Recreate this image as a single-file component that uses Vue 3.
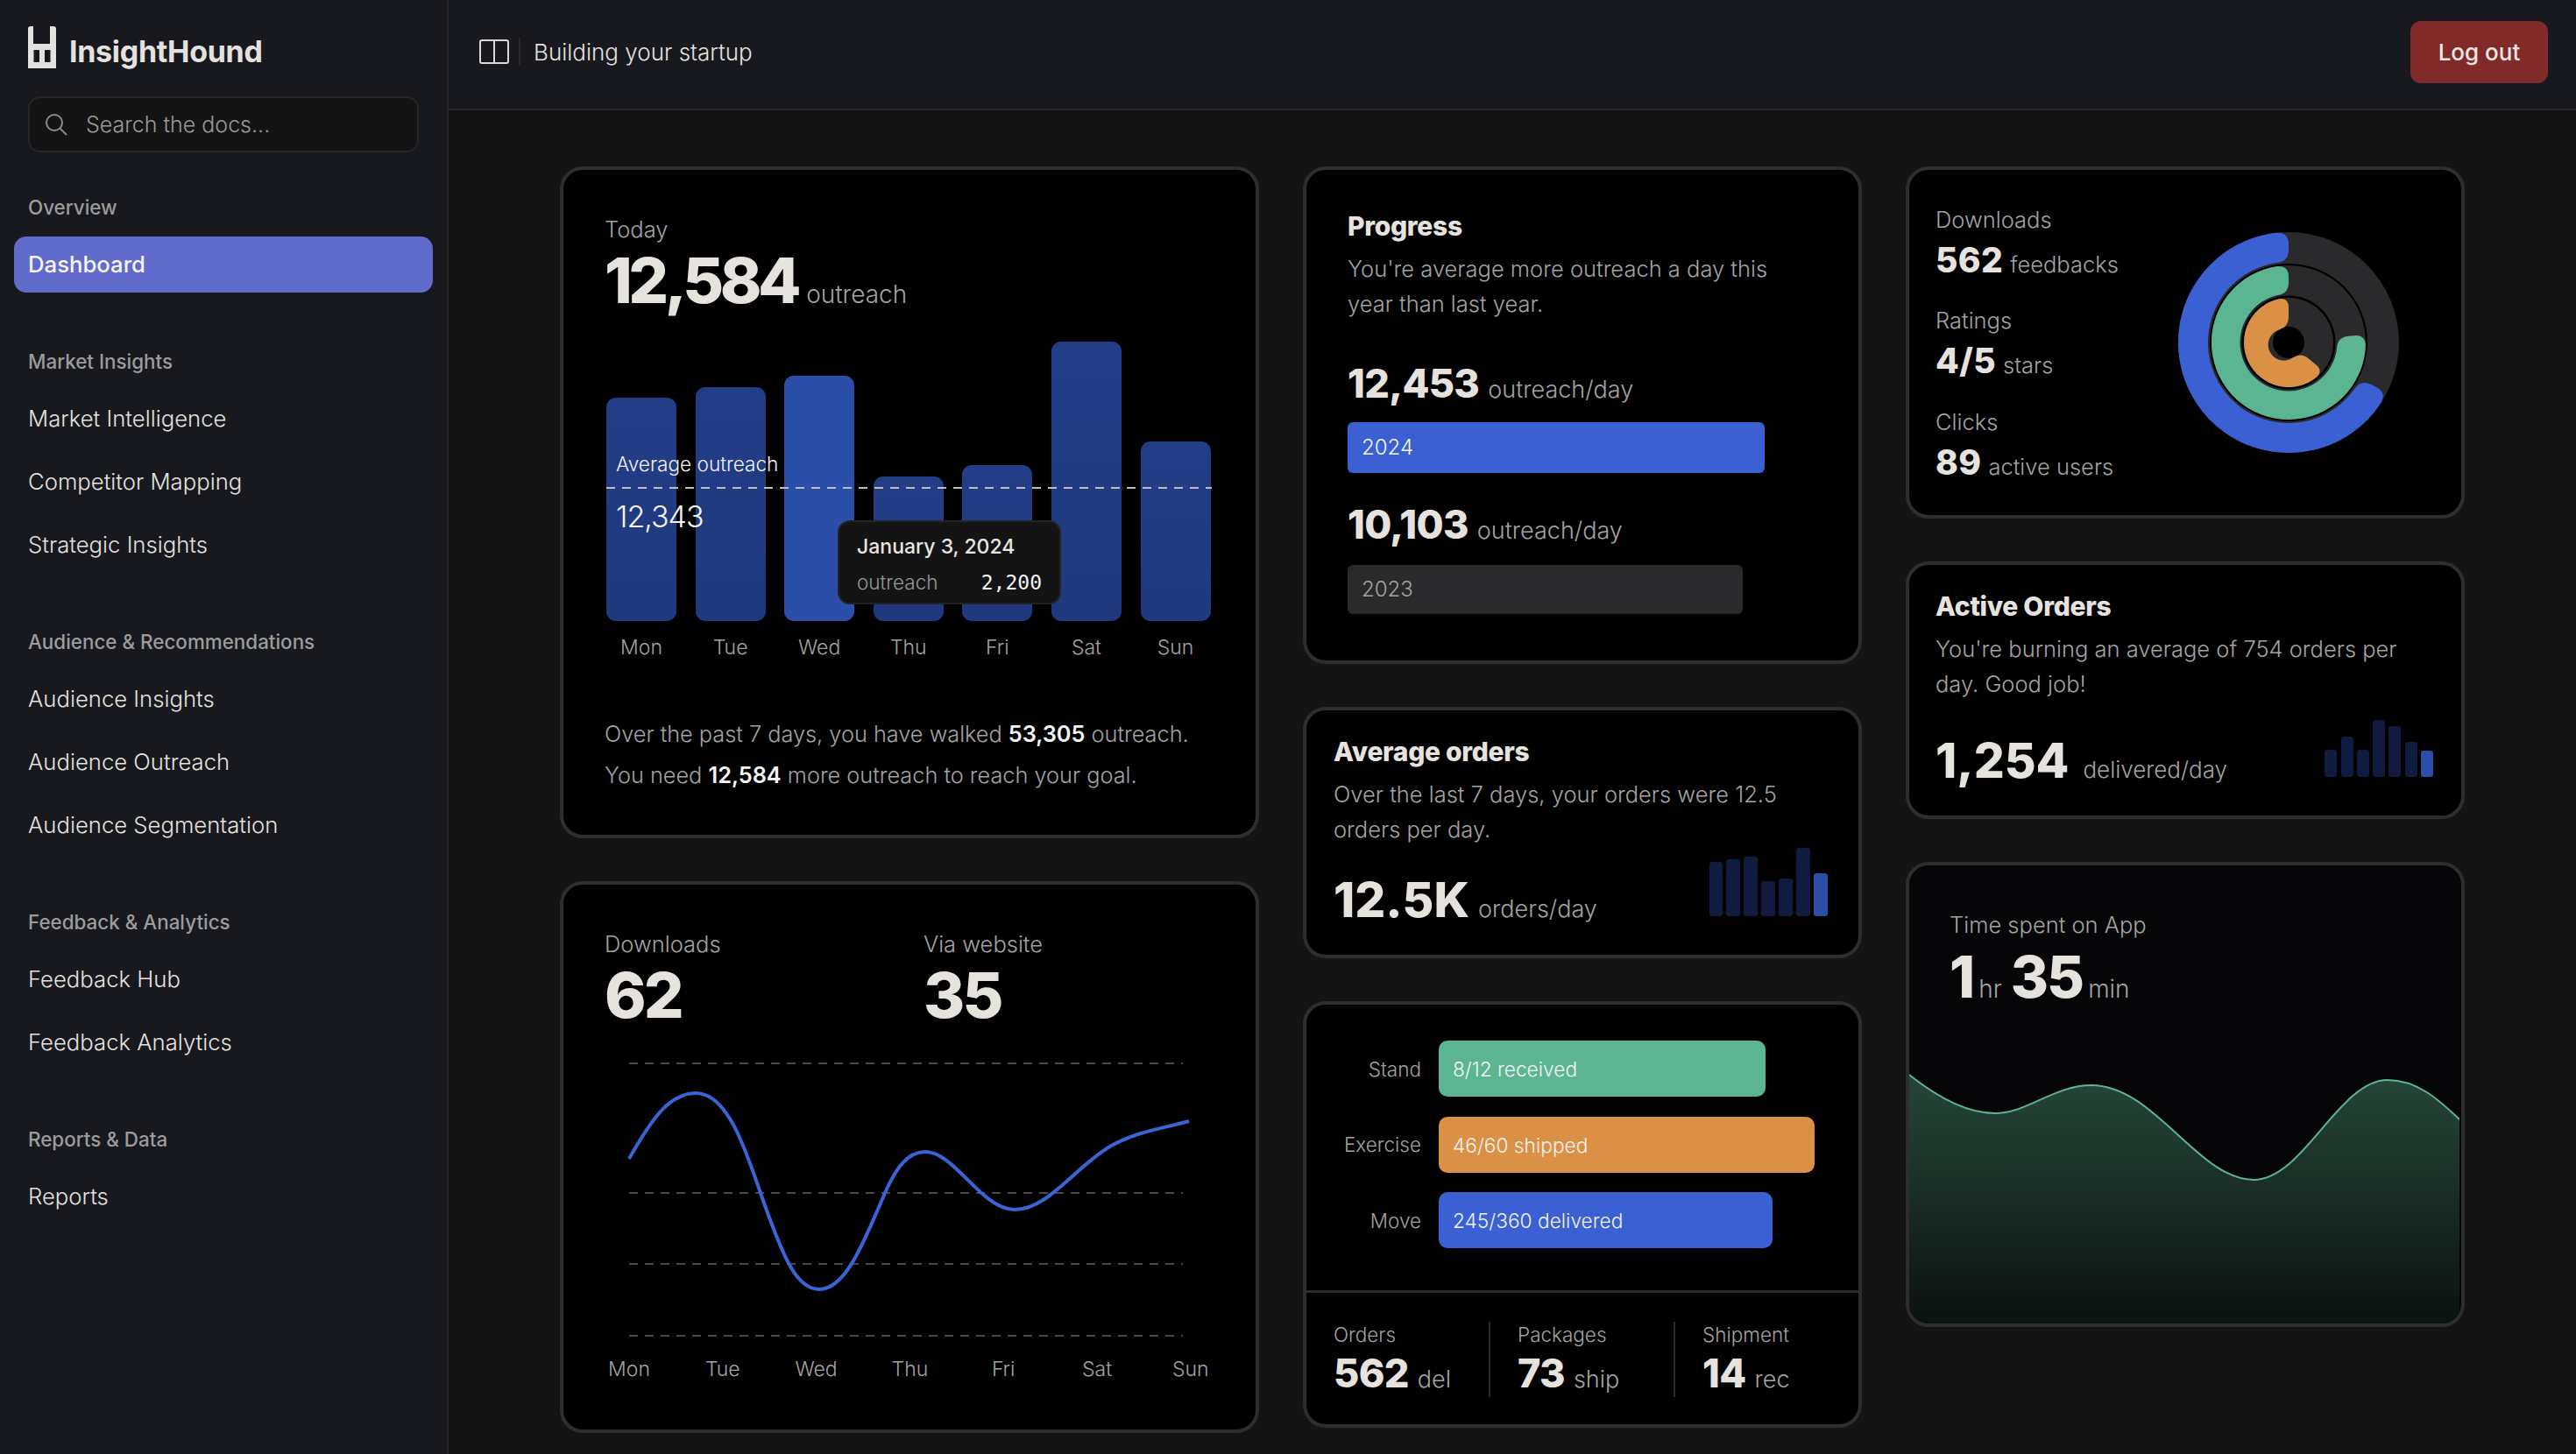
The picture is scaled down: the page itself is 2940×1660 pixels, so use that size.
<template>
  <div class="app">
    <aside class="sidebar">
      <div class="brand">
        <svg class="logo" viewBox="0 0 32 48" width="32" height="48">
          <path fill="#e4e2de" fill-rule="evenodd" d="M0 3Q0 0 3 0H6V20H25V0H29Q32 0 32 3V48H0ZM6.5 27V41H13V27ZM19 27V41H25.5V27Z" />
        </svg>
        <span class="brand-name">InsightHound</span>
      </div>
      <div class="search">
        <svg width="28" height="28" viewBox="0 0 28 28" fill="none" stroke="#8a8a8a" stroke-width="2">
          <circle cx="12" cy="12" r="9" />
          <path d="M18.5 18.5L26 26" />
        </svg>
        <span>Search the docs...</span>
      </div>
      <nav>
        <div v-for="g in nav" :key="g.title" class="group">
          <div class="group-title">{{ g.title }}</div>
          <div v-for="item in g.items" :key="item" class="nav-item" :class="{ active: item === 'Dashboard' }">
            {{ item }}
          </div>
        </div>
      </nav>
    </aside>

    <div class="main">
      <header class="topbar">
        <svg width="34" height="28" viewBox="0 0 34 28" fill="none" stroke="#d8d8d8" stroke-width="2">
          <rect x="1" y="1" width="32" height="26" rx="2" />
          <path d="M17 1V27" />
        </svg>
        <span class="vr"></span>
        <span class="crumb">Building your startup</span>
        <button class="logout">Log out</button>
      </header>

      <div class="grid">
        <div class="col">
          <section class="card today">
            <div class="label">Today</div>
            <div class="val big-row"><span class="num xl tight">12,584</span><span class="unit big-unit">outreach</span></div>
            <div class="chart">
              <div v-for="b in weekBars" :key="b.day" class="bar-col">
                <div class="bar" :class="{ hot: b.day === 'Wed' }" :style="{ height: b.h + 'px' }"></div>
                <div class="day">{{ b.day }}</div>
              </div>
              <div class="avg-line"></div>
              <div class="avg-label">Average outreach</div>
              <div class="avg-value">12,343</div>
              <div class="tooltip">
                <div class="tip-date">January 3, 2024</div>
                <div class="tip-row"><span>outreach</span><b>2,200</b></div>
              </div>
            </div>
            <p class="summary">Over the past 7 days, you have walked <b>53,305</b> outreach.<br />You need <b>12,584</b> more outreach to reach your goal.</p>
          </section>

          <section class="card downloads">
            <div class="two">
              <div>
                <div class="label">Downloads</div>
                <div class="num xl row-80">62</div>
              </div>
              <div>
                <div class="label">Via website</div>
                <div class="num xl row-80">35</div>
              </div>
            </div>
            <svg class="line-chart" viewBox="690 1190 700 400" width="700" height="400">
              <path v-for="y in gridYs" :key="y" :d="`M718 ${y}H1350`" stroke="#4a4a4a" stroke-width="2" stroke-dasharray="10 8" />
              <path d="M718 1323C745 1275 765 1248 794 1248C830 1248 850 1310 868 1362C895 1440 910 1472 935 1472C965 1472 985 1420 1010 1362C1022 1335 1035 1315 1056 1315C1090 1315 1120 1381 1158 1381C1195 1381 1225 1335 1265 1310C1295 1292 1325 1289 1357 1280" fill="none" stroke="#3a63d4" stroke-width="4" />
              <text v-for="(d, i) in lineDays" :key="d" :x="718 + i * 106.8" y="1571" text-anchor="middle" class="svg-day">{{ d }}</text>
            </svg>
          </section>
        </div>

        <div class="col">
          <section class="card progress">
            <h3>Progress</h3>
            <p class="desc">You're average more outreach a day this<br />year than last year.</p>
            <div class="val val-row first"><span class="num md">12,453</span><span class="unit">outreach/day</span></div>
            <div class="year cur">2024</div>
            <div class="val val-row second"><span class="num md">10,103</span><span class="unit">outreach/day</span></div>
            <div class="year old">2023</div>
          </section>

          <section class="card avg">
            <h3>Average orders</h3>
            <p class="desc">Over the last 7 days, your orders were 12.5<br />orders per day.</p>
            <div class="foot">
              <div class="val foot-val"><span class="num lg">12.5K</span><span class="unit">orders/day</span></div>
              <div class="mini wide">
                <i v-for="(h, i) in avgMini" :key="i" :class="{ on: i === avgMini.length - 1 }" :style="{ height: h + 'px' }"></i>
              </div>
            </div>
          </section>

          <section class="card orders">
            <div class="hbars">
              <div v-for="r in hbars" :key="r.name" class="hrow">
                <span class="hname">{{ r.name }}</span>
                <div class="hbar" :style="{ width: r.w + 'px', background: r.color }">{{ r.text }}</div>
              </div>
            </div>
            <div class="stats">
              <div v-for="s in stats" :key="s.label" class="stat">
                <div class="stat-label">{{ s.label }}</div>
                <div class="val stat-val"><span class="num md">{{ s.value }}</span><span class="unit">{{ s.unit }}</span></div>
              </div>
            </div>
          </section>
        </div>

        <div class="col">
          <section class="card rings">
            <div class="ring-text">
              <div v-for="m in ringStats" :key="m.label" class="ring-item">
                <div class="label">{{ m.label }}</div>
                <div class="val ring-val"><span class="num sm">{{ m.value }}</span><span class="unit">{{ m.unit }}</span></div>
              </div>
            </div>
            <svg class="donut" viewBox="-136 -136 272 272" width="272" height="272">
              <circle r="126" fill="#2a2a2c" />
              <circle r="90" fill="#000" />
              <circle r="88" fill="#2a2a2c" />
              <circle r="53.5" fill="#000" />
              <circle r="51" fill="#2a2a2c" />
              <circle r="18" fill="#000" />
              <path v-for="a in arcs" :key="a.color" :d="a.d" :fill="a.color" />
            </svg>
          </section>

          <section class="card active-orders">
            <h3>Active Orders</h3>
            <p class="desc">You're burning an average of 754 orders per<br />day. Good job!</p>
            <div class="foot">
              <div class="val foot-val"><span class="num lg">1,254</span><span class="unit gap">delivered/day</span></div>
              <div class="mini">
                <i v-for="(h, i) in activeMini" :key="i" :class="{ on: i === activeMini.length - 1 }" :style="{ height: h + 'px' }"></i>
              </div>
            </div>
          </section>

          <section class="card time">
            <div class="time-head">
              <div class="label">Time spent on App</div>
              <div class="val time-val"><span class="num xl">1</span><span class="unit">hr</span><span class="num xl">35</span><span class="unit">min</span></div>
            </div>
            <svg class="wave" viewBox="2180 1153 628 357" width="628" height="357">
              <defs>
                <linearGradient id="waveFill" x1="0" y1="0" x2="0" y2="1">
                  <stop offset="0" stop-color="#264638" />
                  <stop offset="1" stop-color="#0c1211" />
                </linearGradient>
              </defs>
              <path :d="wave + 'L2808 1510L2180 1510Z'" fill="url(#waveFill)" />
              <path :d="wave" fill="none" stroke="#5cb592" stroke-width="2" />
            </svg>
          </section>
        </div>
      </div>
    </div>
  </div>
</template>

<script setup>
const nav = [
  { title: 'Overview', items: ['Dashboard'] },
  { title: 'Market Insights', items: ['Market Intelligence', 'Competitor Mapping', 'Strategic Insights'] },
  { title: 'Audience & Recommendations', items: ['Audience Insights', 'Audience Outreach', 'Audience Segmentation'] },
  { title: 'Feedback & Analytics', items: ['Feedback Hub', 'Feedback Analytics'] },
  { title: 'Reports & Data', items: ['Reports'] }
]

const weekBars = [
  { day: 'Mon', h: 255 },
  { day: 'Tue', h: 267 },
  { day: 'Wed', h: 280 },
  { day: 'Thu', h: 165 },
  { day: 'Fri', h: 178 },
  { day: 'Sat', h: 319 },
  { day: 'Sun', h: 205 }
]

const gridYs = [1214, 1362, 1443, 1525]
const lineDays = ['Mon', 'Tue', 'Wed', 'Thu', 'Fri', 'Sat', 'Sun']

const avgMini = [62, 65, 68, 40, 43, 78, 49]
const activeMini = [31, 46, 31, 65, 58, 40, 30]

const hbars = [
  { name: 'Stand', text: '8/12 received', w: 373, color: '#5cb592' },
  { name: 'Exercise', text: '46/60 shipped', w: 429, color: '#db9145' },
  { name: 'Move', text: '245/360 delivered', w: 381, color: '#3a60d3' }
]

const stats = [
  { label: 'Orders', value: '562', unit: 'del' },
  { label: 'Packages', value: '73', unit: 'ship' },
  { label: 'Shipment', value: '14', unit: 'rec' }
]

const ringStats = [
  { label: 'Downloads', value: '562', unit: 'feedbacks' },
  { label: 'Ratings', value: '4/5', unit: 'stars' },
  { label: 'Clicks', value: '89', unit: 'active users' }
]

const wave = 'M2180 1226C2210 1250 2245 1270 2278 1270C2315 1270 2345 1238 2388 1238C2460 1238 2510 1346 2573 1346C2630 1346 2670 1232 2726 1232C2760 1232 2785 1255 2808 1277'

function polar(r, deg) {
  const a = (deg * Math.PI) / 180
  return `${(r * Math.sin(a)).toFixed(2)} ${(-r * Math.cos(a)).toFixed(2)}`
}

// ring segment running anticlockwise from 12 o'clock, with softened corners
function ringArc(rIn, rOut, sweep, c) {
  const dOut = ((c / rOut) * 180) / Math.PI
  const dIn = ((c / rIn) * 180) / Math.PI
  const large = sweep > 180 ? 1 : 0
  return [
    `M${polar(rOut - c, 0)}`,
    `Q${polar(rOut, 0)} ${polar(rOut, -dOut)}`,
    `A${rOut} ${rOut} 0 ${large} 0 ${polar(rOut, -(sweep - dOut))}`,
    `Q${polar(rOut, -sweep)} ${polar(rOut - c, -sweep)}`,
    `L${polar(rIn + c, -sweep)}`,
    `Q${polar(rIn, -sweep)} ${polar(rIn, -(sweep - dIn))}`,
    `A${rIn} ${rIn} 0 ${large} 1 ${polar(rIn, -dIn)}`,
    `Q${polar(rIn, 0)} ${polar(rIn + c, 0)}Z`
  ].join('')
}

const arcs = [
  { color: '#3a60d3', d: ringArc(92, 126, 243, 14) },
  { color: '#5cb592', d: ringArc(55.5, 88, 276, 13) },
  { color: '#db9145', d: ringArc(18, 51, 231, 11) }
]
</script>

<style scoped>
.app {
  display: flex;
  width: 2940px;
  height: 1660px;
  overflow: hidden;
  background: #141414;
  color: #a3a3a3;
  font-family: Inter, "Liberation Sans", sans-serif;
  font-weight: 300;
}
.sidebar {
  width: 512px;
  flex: none;
  box-sizing: border-box;
  background: #18181f;
  border-right: 2px solid #26262b;
  padding-top: 30px;
}
.brand {
  display: flex;
  align-items: center;
  gap: 15px;
  margin-left: 32px;
  height: 48px;
}
.brand-name {
  font-size: 34px;
  font-weight: 700;
  letter-spacing: -0.3px;
  color: #e4e2de;
  margin-top: 9px;
}
.search {
  display: flex;
  align-items: center;
  gap: 20px;
  box-sizing: border-box;
  margin: 32px 0 0 32px;
  width: 446px;
  height: 64px;
  padding-left: 16px;
  background: #141414;
  border: 2px solid #26262b;
  border-radius: 14px;
  font-size: 25px;
  color: #9a9a9a;
}
nav {
  margin-top: 47px;
}
.group {
  margin-bottom: 63px;
}
.group-title {
  padding-left: 32px;
  height: 30px;
  line-height: 32px;
  font-size: 22.4px;
  font-weight: 500;
  color: #9c9c9c;
  margin-bottom: 19px;
}
.nav-item {
  margin: 0 16px 8px;
  padding-left: 16px;
  height: 64px;
  line-height: 64px;
  font-size: 25.7px;
  font-weight: 300;
  color: #e4e2de;
  border-radius: 14px;
}
.nav-item.active {
  background: #616bcc;
  color: #f5f5f5;
  font-weight: 500;
}
.main {
  flex: 1;
  min-width: 0;
}
.topbar {
  display: flex;
  align-items: center;
  box-sizing: border-box;
  height: 126px;
  padding: 0 32px 6px 35px;
  background: #18181f;
  border-bottom: 2px solid #26262b;
}
.vr {
  width: 2px;
  height: 32px;
  margin: 0 15px 0 11px;
  background: #2a2a2e;
}
.crumb {
  font-size: 26px;
  color: #e4e2de;
}
.logout {
  margin-left: auto;
  width: 157px;
  height: 71px;
  border: 0;
  border-radius: 12px;
  background: #802a2a;
  color: #ece8e4;
  font: 500 26px Inter, sans-serif;
}
.grid {
  display: grid;
  grid-template-columns: 798px 638px 638px;
  gap: 50px;
  padding: 64px 0 0 127px;
}
.col {
  display: flex;
  flex-direction: column;
  gap: 49px;
}
.card {
  box-sizing: border-box;
  background: #000;
  border: 4px solid #2e2e2e;
  border-radius: 26px;
  overflow: hidden;
}
.val {
  display: flex;
  align-items: baseline;
}
.num {
  color: #e6e3df;
  font-weight: 800;
  letter-spacing: -0.015em;
}
.xl { font-size: 72px; letter-spacing: -0.03em; }
.tight { letter-spacing: -0.0625em; }
.lg { font-size: 55px; letter-spacing: 0; }
.md { font-size: 45px; }
.sm { font-size: 39px; letter-spacing: 0.01em; }
.unit {
  font-size: 27px;
  line-height: 1;
  color: #a3a3a3;
  margin-left: 10px;
}
.big-unit { font-size: 28px; }
.unit.gap { margin-left: 16px; font-size: 26px; }
.label {
  font-size: 25.5px;
  line-height: 36px;
  color: #a3a3a3;
}
h3 {
  margin: 0;
  font-size: 30px;
  line-height: 36px;
  font-weight: 800;
  letter-spacing: -0.01em;
  color: #e6e3df;
}
.desc {
  margin: 11px 0 0;
  font-size: 25.5px;
  line-height: 40px;
  color: #a3a3a3;
}

.today {
  height: 767px;
  padding: 50px 0 0 47px;
}
.big-row {
  height: 80px;
  line-height: 80px;
}
.chart {
  position: relative;
  display: flex;
  align-items: flex-end;
  gap: 21.6px;
  width: 691px;
  height: 364px;
  margin: 30px 0 0 2px;
}
.bar-col {
  width: 80px;
}
.bar {
  border-radius: 11px;
  background: linear-gradient(180deg, #233d87, #1f397f);
}
.bar.hot {
  background: #2b4fa8;
}
.day {
  margin-top: 15px;
  line-height: 30px;
  text-align: center;
  font-size: 23px;
  color: #a3a3a3;
}
.avg-line {
  position: absolute;
  left: 0;
  right: 0;
  top: 166px;
  height: 2px;
  background: repeating-linear-gradient(90deg, #bdbdbd 0 10px, transparent 10px 18px);
}
.avg-label {
  position: absolute;
  left: 11px;
  top: 124px;
  font-size: 22.6px;
  line-height: 32px;
  color: #f2f2f2;
}
.avg-value {
  position: absolute;
  left: 11px;
  top: 178px;
  font-size: 34px;
  line-height: 44px;
  color: #f5f5f5;
  letter-spacing: -1px;
}
.tooltip {
  position: absolute;
  left: 264px;
  top: 204px;
  box-sizing: border-box;
  width: 255px;
  height: 96px;
  padding: 12px 20px 0;
  background: #141414;
  border: 2px solid #232323;
  border-radius: 14px;
}
.tip-date {
  font-size: 23px;
  line-height: 32px;
  font-weight: 500;
  color: #e8e6e2;
}
.tip-row {
  display: flex;
  justify-content: space-between;
  margin-top: 9px;
  font-size: 22.5px;
  line-height: 32px;
  color: #979797;
}
.tip-row b {
  font-family: "DejaVu Sans Mono", "Liberation Mono", monospace;
  font-weight: 400;
  font-size: 23px;
  color: #f5f5f5;
}
.summary {
  margin: 60px 0 0;
  font-size: 25.3px;
  line-height: 47px;
  color: #a3a3a3;
}
.summary b {
  font-weight: 600;
  color: #f5f5f5;
}

.downloads {
  height: 630px;
  padding: 50px 0 0 47px;
}
.two {
  display: flex;
}
.two > div {
  width: 364px;
}
.row-80 {
  line-height: 80px;
  letter-spacing: -0.04em;
}
.line-chart {
  display: block;
  margin-top: 14px;
}
.svg-day {
  font-size: 23px;
  fill: #a3a3a3;
}

.progress {
  height: 568px;
  padding: 46px 0 0 47px;
}
.val-row {
  height: 60px;
  line-height: 60px;
}
.val-row.first { margin-top: 41px; }
.val-row.second { margin-top: 29px; }
.year {
  box-sizing: border-box;
  padding-left: 16px;
  font-size: 24px;
  border-radius: 6px;
}
.year.cur {
  width: 476px;
  height: 58px;
  line-height: 58px;
  margin-top: 14px;
  background: #3a60d3;
  color: #f5f5f5;
}
.year.old {
  width: 451px;
  height: 56px;
  line-height: 56px;
  margin-top: 16px;
  background: #2a2a2c;
  color: #a3a3a3;
}

.avg {
  height: 287px;
  padding: 29px 35px 0 31px;
}
.active-orders {
  height: 294px;
  padding: 29px 32px 0 30px;
}
.foot {
  display: flex;
  justify-content: space-between;
  align-items: flex-end;
  height: 66px;
  margin-top: 27px;
}
.active-orders .foot {
  margin-top: 34px;
}
.foot-val {
  height: 66px;
  line-height: 66px;
}
.mini {
  display: flex;
  align-items: flex-end;
  gap: 4.3px;
  margin-bottom: 14px;
}
.mini.wide {
  gap: 4.4px;
}
.mini i {
  display: block;
  width: 14px;
  border-radius: 3px;
  background: #101c3f;
}
.mini.wide i {
  width: 15.6px;
}
.mini i.on {
  background: #2d4fa8;
}

.orders {
  height: 487px;
}
.hbars {
  display: flex;
  flex-direction: column;
  gap: 22.5px;
  padding-top: 41px;
  height: 329px;
  box-sizing: border-box;
  border-bottom: 3px solid #2a2a2a;
}
.hrow {
  display: flex;
  align-items: center;
  gap: 20px;
}
.hname {
  width: 131px;
  text-align: right;
  font-size: 22.5px;
  color: #a3a3a3;
}
.hbar {
  height: 64px;
  line-height: 66px;
  padding-left: 16px;
  box-sizing: border-box;
  border-radius: 10px;
  font-size: 22.7px;
  color: #f2f2f2;
}
.stats {
  display: flex;
  padding-top: 33px;
}
.stat {
  width: 212px;
  height: 86px;
  box-sizing: border-box;
  padding-left: 31px;
  border-left: 2px solid #2a2a2a;
}
.stat:first-child {
  width: 209px;
  border-left: 0;
}
.stat-label {
  font-size: 22.5px;
  line-height: 28px;
  margin-top: 1px;
}
.stat-val {
  margin-top: 4px;
  line-height: 52px;
}

.rings {
  height: 402px;
  display: flex;
  justify-content: space-between;
  align-items: center;
  padding: 0 61px 0 30px;
}
.ring-text {
  display: flex;
  flex-direction: column;
  gap: 29.5px;
}
.ring-val {
  margin-top: 6px;
  height: 44px;
  line-height: 44px;
}
.ring-val .unit {
  font-size: 25.5px;
  margin-left: 8px;
}
.time {
  height: 531px;
  background: #060608;
}
.time-head {
  padding: 50px 0 0 46px;
  height: 166px;
  box-sizing: border-box;
}
.time-val {
  margin-top: 3px;
  line-height: 76px;
}
.time .num.xl {
  font-size: 66px;
}
.time .unit {
  font-size: 28px;
  margin: 0 10px 0 6px;
}
.wave {
  display: block;
}
</style>

<style>
html,
body {
  background: #141414;
}
</style>
